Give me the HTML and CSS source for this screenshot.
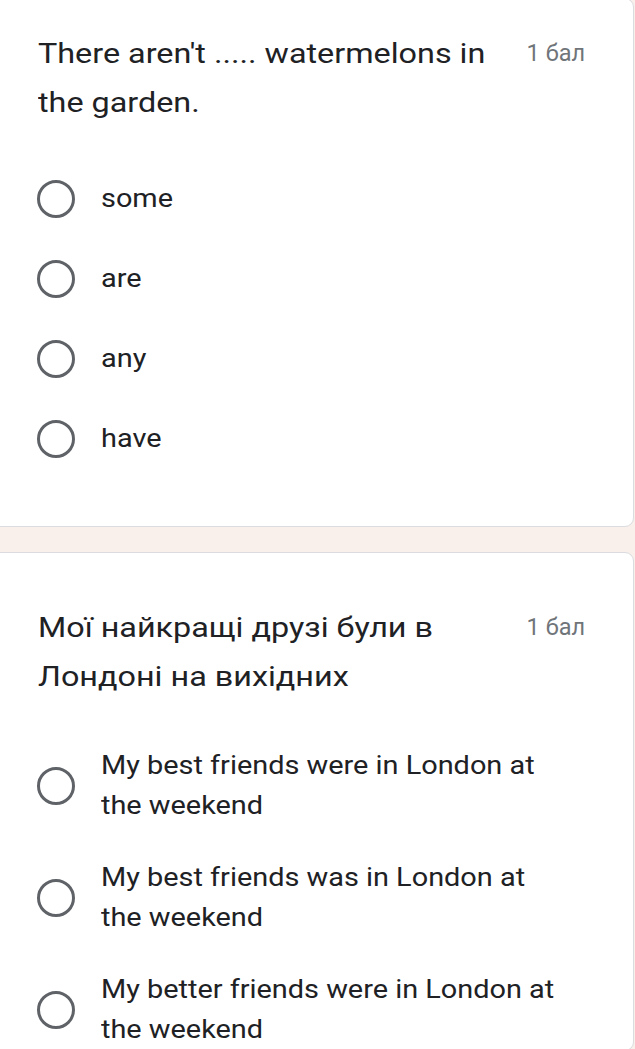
FILE: index.html
```html
<!DOCTYPE html>
<html lang="uk">
<head>
<meta charset="utf-8">
<title>Form</title>
<link rel="stylesheet" href="styles.css">
</head>
<body>
<div class="card card-first">
  <div class="head">
    <div class="title"><span class="wide">There aren't ..... watermelons in the garden.</span></div>
    <div class="points">1 бал</div>
  </div>
  <div class="options">
    <div class="opt short"><span class="radio"></span><span class="label"><span class="wide">some</span></span></div>
    <div class="opt short"><span class="radio"></span><span class="label"><span class="wide">are</span></span></div>
    <div class="opt short"><span class="radio"></span><span class="label"><span class="wide">any</span></span></div>
    <div class="opt short"><span class="radio"></span><span class="label"><span class="wide">have</span></span></div>
  </div>
</div>
<div class="card card-second">
  <div class="head">
    <div class="title"><span class="wide">Мої найкращі друзі були в Лондоні на вихідних</span></div>
    <div class="points">1 бал</div>
  </div>
  <div class="options long-list">
    <div class="opt long"><span class="radio"></span><span class="label"><span class="wide">My best friends were in London at the weekend</span></span></div>
    <div class="opt long"><span class="radio"></span><span class="label"><span class="wide">My best friends was in London at the weekend</span></span></div>
    <div class="opt long"><span class="radio"></span><span class="label"><span class="wide">My better friends were in London at the weekend</span></span></div>
  </div>
</div>
</body>
</html>
```
FILE: styles.css
```css
html, body {
  margin: 0;
  padding: 0;
}
body {
  background: #f9f0eb;
  font-family: Roboto, "Noto Sans", Arial, sans-serif;
  color: #202124;
  overflow: hidden;
  height: 1049px;
}
.card {
  background: #fff;
  border: 1.5px solid #dadce0;
  border-radius: 9px;
  margin-left: -12px;
  width: 646px;
  box-sizing: border-box;
  padding: 0 48px 0 49px;
}
.card-first {
  margin-top: -2px;
  padding-top: 30px;
  padding-bottom: 48px;
  height: 529px;
}
.card-second {
  margin-top: 25px;
  padding-top: 50px;
}
.head {
  display: flex;
  align-items: flex-start;
}
.title {
  flex: 1;
  min-width: 0;
  font-size: 28px;
  line-height: 49px;
  margin-right: 24px;
}
.wide {
  display: block;
  transform-origin: left center;
}
.title .wide {
  width: calc(100% / 1.155);
  transform: scaleX(1.155);
}
.points {
  font-size: 23.5px;
  line-height: 49px;
  color: #70757a;
  white-space: nowrap;
}
.options {
  margin-top: 32px;
  display: flex;
  flex-direction: column;
}
.long-list {
  margin-top: 45px;
  gap: 32px;
}
.opt {
  display: flex;
  align-items: center;
}
.opt.short {
  height: 80px;
}
.radio {
  flex: none;
  width: 38px;
  height: 38px;
  box-sizing: border-box;
  border: 3.5px solid #5f6368;
  border-radius: 50%;
  margin-left: -1px;
  margin-right: 26px;
}
.label {
  flex: 1;
  min-width: 0;
  font-size: 25px;
  line-height: 40px;
  color: #202124;
}
.label .wide {
  width: calc((100% - 20px) / 1.155);
  transform: scaleX(1.155);
}
```
